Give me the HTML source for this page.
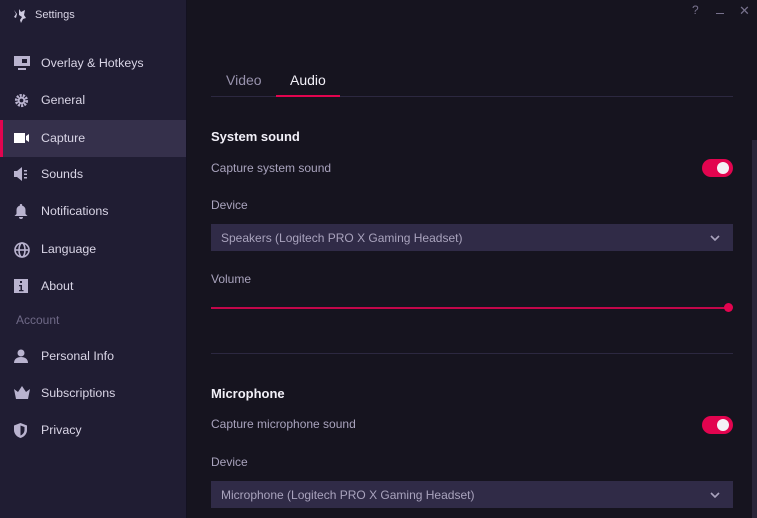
<!DOCTYPE html><html><head><style>
*{margin:0;padding:0;box-sizing:border-box}
body{width:757px;height:518px;overflow:hidden;background:#16141f;font-family:"Liberation Sans",sans-serif;position:relative;color:#ece9f5}
.sb{position:absolute;left:0;top:0;width:187px;height:518px;background:#201d33;border-right:1px solid #131120}
.t{position:absolute;white-space:nowrap}
.it{position:absolute;left:0;width:186px;height:37px;font-size:12.4px;color:#d9d5e6}
.it span{position:absolute;left:41px;top:11px}
.it svg{position:absolute;left:14px;top:11px}
.sel{background:#35304b;border-left:3px solid #e2044f}
.m{color:#a9a3bd;font-size:12px}
.h{font-size:13px;font-weight:bold;color:#f2f0f8}
.tog{position:absolute;width:31px;height:18px;border-radius:9px;background:#e2044f}
.tog:after{content:"";position:absolute;right:4px;top:3px;width:12px;height:12px;border-radius:6px;background:#f4f0f6}
.dd{position:absolute;left:211px;width:522px;height:27px;background:#302b47;font-size:12px;color:#a9a3bd}
.dd span{position:absolute;left:10px;top:7px}
.dd svg{position:absolute;right:13px;top:11px}
</style></head><body>
<div class="sb">
<svg class="t" style="left:12px;top:8px" width="16" height="16" viewBox="0 0 16 16" fill="#cfcbe0"><path d="M2 2l2 4-2 3 2 1 1-4zM7 1l2 3 4-2-1 5 2 3-3 1-2 4-1-3 2-3-3-2z"/></svg>
<div class="t" style="left:35px;top:9px;font-size:11px;color:#d9d5e6">Settings</div>
<div class="it" style="top:45px"><svg width="16" height="14" viewBox="0 0 16 14" fill="#b9b3cf"><rect x="0" y="0" width="16" height="10"/><rect x="8" y="3" width="5" height="4" fill="#201d33"/><rect x="4" y="12" width="8" height="2"/></svg><span>Overlay &amp; Hotkeys</span></div>
<div class="it" style="top:82px"><svg width="15" height="15" viewBox="0 0 16 16"><circle cx="8" cy="8" r="5.5" fill="none" stroke="#b9b3cf" stroke-width="3" stroke-dasharray="2.2 1.2"/><circle cx="8" cy="8" r="4" fill="#b9b3cf"/><circle cx="8" cy="8" r="2" fill="#201d33"/></svg><span>General</span></div>
<div class="it sel" style="top:120px"><svg width="16" height="12" viewBox="0 0 16 12" fill="#fff" style="left:11px;top:12px"><rect x="0" y="1" width="11" height="10"/><path d="M12 4l3-2v8l-3-2z"/></svg><span style="left:38px">Capture</span></div>
<div class="it" style="top:156px"><svg width="16" height="14" viewBox="0 0 16 14" fill="#b9b3cf"><path d="M0 4h3l5-4v14l-5-4H0z"/><rect x="10" y="3" width="3" height="1.5"/><rect x="10" y="6.5" width="3" height="1.5"/><rect x="10" y="10" width="3" height="1.5"/></svg><span>Sounds</span></div>
<div class="it" style="top:193px"><svg width="14" height="15" viewBox="0 0 14 15" fill="#b9b3cf"><path d="M7 0a1 1 0 011 1.5A4.5 4.5 0 0111.5 6v4l2 2H.5l2-2V6A4.5 4.5 0 016 1.5 1 1 0 017 0zM5 13h4a2 2 0 01-4 0z"/></svg><span>Notifications</span></div>
<div class="it" style="top:231px"><svg width="16" height="16" viewBox="0 0 16 16" fill="none" stroke="#b9b3cf" stroke-width="1.6"><circle cx="8" cy="8" r="7"/><ellipse cx="8" cy="8" rx="3" ry="7"/><path d="M1 8h14"/></svg><span>Language</span></div>
<div class="it" style="top:268px"><svg width="14" height="14" viewBox="0 0 14 14"><rect width="14" height="14" fill="#b9b3cf"/><rect x="6" y="2" width="2" height="2" fill="#201d33"/><path d="M5 6h3v5h1.5v1.2h-4.5V11H6.5V7.2H5z" fill="#201d33"/></svg><span>About</span></div>
<div class="t" style="left:16px;top:313px;font-size:12px;color:#6f6987">Account</div>
<div class="it" style="top:338px"><svg width="14" height="14" viewBox="0 0 14 14" fill="#b9b3cf"><circle cx="7" cy="4" r="3.5"/><path d="M0 14c0-4 3-6 7-6s7 2 7 6z"/></svg><span>Personal Info</span></div>
<div class="it" style="top:375px"><svg width="16" height="13" viewBox="0 0 16 13" fill="#b9b3cf"><path d="M0 3l4 3 4-6 4 6 4-3-2 10H2z"/></svg><span>Subscriptions</span></div>
<div class="it" style="top:412px"><svg width="13" height="15" viewBox="0 0 13 15"><path d="M6.5 0L13 2.5V7c0 4-3 7-6.5 8C3 14 0 11 0 7V2.5z" fill="#b9b3cf"/><path d="M6.5 2.5L10.5 4V7c0 2.5-1.8 4.6-4 5.5z" fill="#201d33"/></svg><span>Privacy</span></div>
</div>
<div class="t" style="left:692px;top:3px;color:#77718c;font-size:12px">?</div>
<div class="t" style="left:716px;top:13px;width:8px;height:1px;background:#77718c"></div>
<div class="t" style="left:739px;top:3px;color:#77718c;font-size:13px">✕</div>
<div class="t" style="left:752px;top:140px;width:5px;height:378px;background:#2a2639"></div>
<div class="t" style="left:226px;top:72px;font-size:14px;color:#9892ad">Video</div>
<div class="t" style="left:290px;top:72px;font-size:14px;color:#f2f0f8">Audio</div>
<div class="t" style="left:211px;top:96px;width:522px;height:1px;background:#2c2840"></div>
<div class="t" style="left:276px;top:95px;width:64px;height:2px;background:#e2044f"></div>
<div class="t h" style="left:211px;top:129px">System sound</div>
<div class="t m" style="left:211px;top:161px">Capture system sound</div>
<div class="tog" style="left:702px;top:159px"></div>
<div class="t m" style="left:211px;top:198px">Device</div>
<div class="dd" style="top:224px"><span>Speakers (Logitech PRO X Gaming Headset)</span><svg width="10" height="6" viewBox="0 0 10 6" fill="none" stroke="#a9a3bd" stroke-width="1.6"><path d="M1 1l4 4 4-4"/></svg></div>
<div class="t m" style="left:211px;top:272px">Volume</div>
<div class="t" style="left:211px;top:307px;width:517px;height:1.5px;background:#c2074a"></div>
<div class="t" style="left:724px;top:303px;width:9px;height:9px;border-radius:5px;background:#e2044f"></div>
<div class="t" style="left:211px;top:353px;width:522px;height:1px;background:#2c2840"></div>
<div class="t h" style="left:211px;top:386px">Microphone</div>
<div class="t m" style="left:211px;top:417px">Capture microphone sound</div>
<div class="tog" style="left:702px;top:416px"></div>
<div class="t m" style="left:211px;top:455px">Device</div>
<div class="dd" style="top:481px"><span>Microphone (Logitech PRO X Gaming Headset)</span><svg width="10" height="6" viewBox="0 0 10 6" fill="none" stroke="#a9a3bd" stroke-width="1.6"><path d="M1 1l4 4 4-4"/></svg></div>
</body></html>
